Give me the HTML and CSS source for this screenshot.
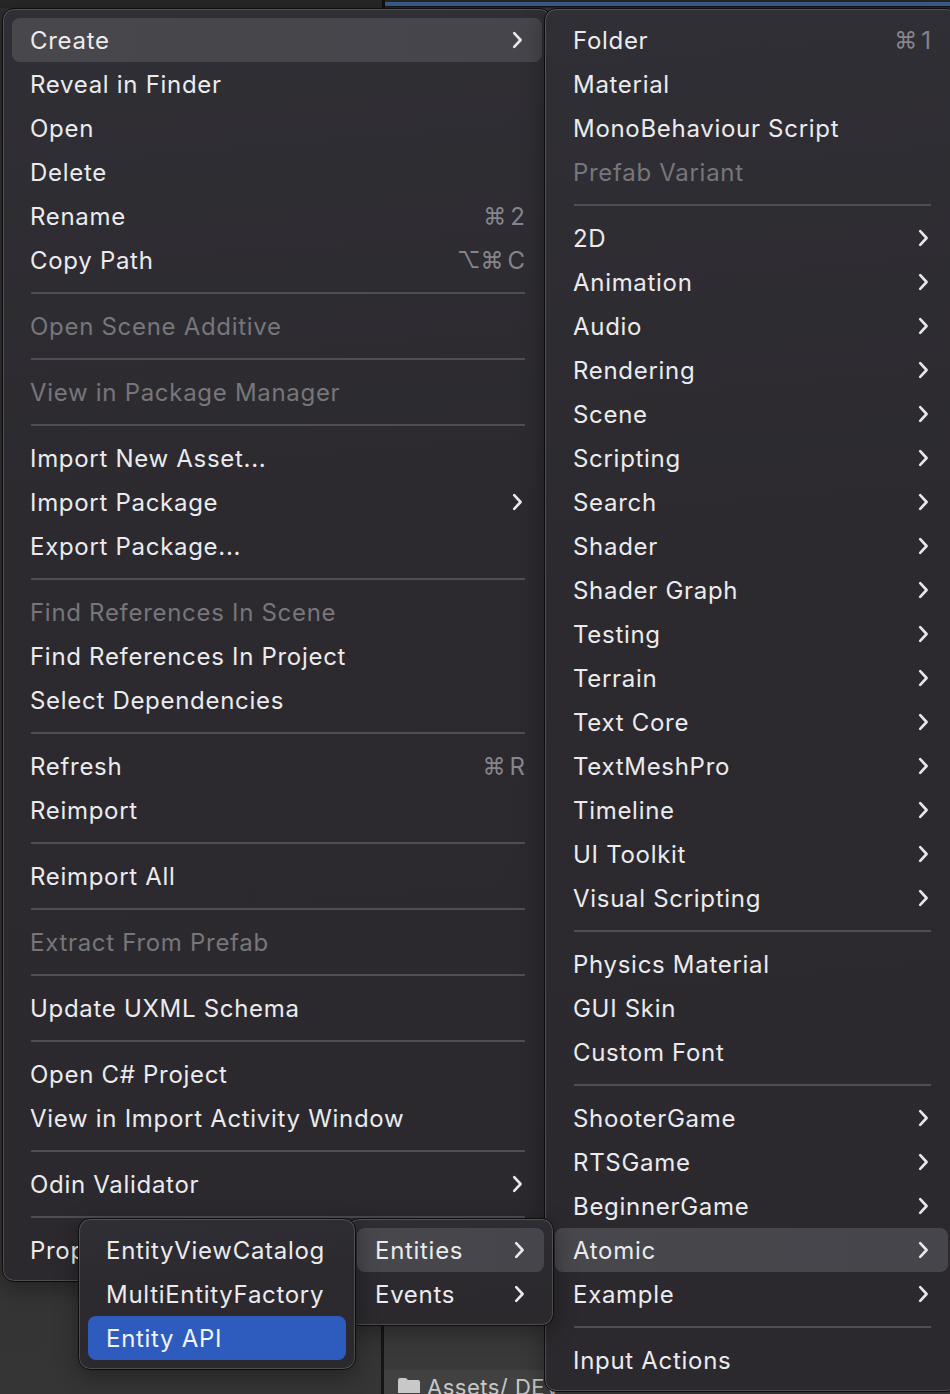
FILE: index.html
```html
<!DOCTYPE html>
<html>
<head>
<meta charset="utf-8">
<link rel="stylesheet" href="styles.css">
</head>
<body>
<div class="desk">
  <div class="topbar">
    <div class="tb-left"></div>
    <div class="tb-blue"></div>
  </div>
  <div class="lower">
    <div class="lower-left"></div>
    <div class="lower-right">
      <div class="pathbar">
        <svg class="folder" width="24" height="16" viewBox="0 0 24 16"><path d="M1 3 Q1 1 3 1 L9 1 L11 3 L21 3 Q23 3 23 5 L23 16 L1 16 Z" fill="#c8c8c8"/></svg>
        <span class="path-text">Assets/ DEV</span>
      </div>
    </div>
  </div>

  <div class="menu menu-main">
    <div class="item hl"><span class="label">Create</span><svg class="chev" viewBox="0 0 11 18"><path d="M2.2 2.2 L8.6 9 L2.2 15.8"/></svg></div>
    <div class="item"><span class="label">Reveal in Finder</span></div>
    <div class="item"><span class="label">Open</span></div>
    <div class="item"><span class="label">Delete</span></div>
    <div class="item"><span class="label">Rename</span><span class="key">⌘<i>2</i></span></div>
    <div class="item"><span class="label">Copy Path</span><span class="key">⌥⌘<i>C</i></span></div>
    <div class="sep"></div>
    <div class="item off"><span class="label">Open Scene Additive</span></div>
    <div class="sep"></div>
    <div class="item off"><span class="label">View in Package Manager</span></div>
    <div class="sep"></div>
    <div class="item"><span class="label">Import New Asset...</span></div>
    <div class="item"><span class="label">Import Package</span><svg class="chev" viewBox="0 0 11 18"><path d="M2.2 2.2 L8.6 9 L2.2 15.8"/></svg></div>
    <div class="item"><span class="label">Export Package...</span></div>
    <div class="sep"></div>
    <div class="item off"><span class="label">Find References In Scene</span></div>
    <div class="item"><span class="label">Find References In Project</span></div>
    <div class="item"><span class="label">Select Dependencies</span></div>
    <div class="sep"></div>
    <div class="item"><span class="label">Refresh</span><span class="key">⌘<i>R</i></span></div>
    <div class="item"><span class="label">Reimport</span></div>
    <div class="sep"></div>
    <div class="item"><span class="label">Reimport All</span></div>
    <div class="sep"></div>
    <div class="item off"><span class="label">Extract From Prefab</span></div>
    <div class="sep"></div>
    <div class="item"><span class="label">Update UXML Schema</span></div>
    <div class="sep"></div>
    <div class="item"><span class="label">Open C# Project</span></div>
    <div class="item"><span class="label">View in Import Activity Window</span></div>
    <div class="sep"></div>
    <div class="item"><span class="label">Odin Validator</span><svg class="chev" viewBox="0 0 11 18"><path d="M2.2 2.2 L8.6 9 L2.2 15.8"/></svg></div>
    <div class="sep"></div>
    <div class="item"><span class="label">Properties...</span></div>
  </div>

  <div class="menu menu-create">
    <div class="item"><span class="label">Folder</span><span class="key">⌘<i>1</i></span></div>
    <div class="item"><span class="label">Material</span></div>
    <div class="item"><span class="label">MonoBehaviour Script</span></div>
    <div class="item off"><span class="label">Prefab Variant</span></div>
    <div class="sep"></div>
    <div class="item"><span class="label">2D</span><svg class="chev" viewBox="0 0 11 18"><path d="M2.2 2.2 L8.6 9 L2.2 15.8"/></svg></div>
    <div class="item"><span class="label">Animation</span><svg class="chev" viewBox="0 0 11 18"><path d="M2.2 2.2 L8.6 9 L2.2 15.8"/></svg></div>
    <div class="item"><span class="label">Audio</span><svg class="chev" viewBox="0 0 11 18"><path d="M2.2 2.2 L8.6 9 L2.2 15.8"/></svg></div>
    <div class="item"><span class="label">Rendering</span><svg class="chev" viewBox="0 0 11 18"><path d="M2.2 2.2 L8.6 9 L2.2 15.8"/></svg></div>
    <div class="item"><span class="label">Scene</span><svg class="chev" viewBox="0 0 11 18"><path d="M2.2 2.2 L8.6 9 L2.2 15.8"/></svg></div>
    <div class="item"><span class="label">Scripting</span><svg class="chev" viewBox="0 0 11 18"><path d="M2.2 2.2 L8.6 9 L2.2 15.8"/></svg></div>
    <div class="item"><span class="label">Search</span><svg class="chev" viewBox="0 0 11 18"><path d="M2.2 2.2 L8.6 9 L2.2 15.8"/></svg></div>
    <div class="item"><span class="label">Shader</span><svg class="chev" viewBox="0 0 11 18"><path d="M2.2 2.2 L8.6 9 L2.2 15.8"/></svg></div>
    <div class="item"><span class="label">Shader Graph</span><svg class="chev" viewBox="0 0 11 18"><path d="M2.2 2.2 L8.6 9 L2.2 15.8"/></svg></div>
    <div class="item"><span class="label">Testing</span><svg class="chev" viewBox="0 0 11 18"><path d="M2.2 2.2 L8.6 9 L2.2 15.8"/></svg></div>
    <div class="item"><span class="label">Terrain</span><svg class="chev" viewBox="0 0 11 18"><path d="M2.2 2.2 L8.6 9 L2.2 15.8"/></svg></div>
    <div class="item"><span class="label">Text Core</span><svg class="chev" viewBox="0 0 11 18"><path d="M2.2 2.2 L8.6 9 L2.2 15.8"/></svg></div>
    <div class="item"><span class="label">TextMeshPro</span><svg class="chev" viewBox="0 0 11 18"><path d="M2.2 2.2 L8.6 9 L2.2 15.8"/></svg></div>
    <div class="item"><span class="label">Timeline</span><svg class="chev" viewBox="0 0 11 18"><path d="M2.2 2.2 L8.6 9 L2.2 15.8"/></svg></div>
    <div class="item"><span class="label">UI Toolkit</span><svg class="chev" viewBox="0 0 11 18"><path d="M2.2 2.2 L8.6 9 L2.2 15.8"/></svg></div>
    <div class="item"><span class="label">Visual Scripting</span><svg class="chev" viewBox="0 0 11 18"><path d="M2.2 2.2 L8.6 9 L2.2 15.8"/></svg></div>
    <div class="sep"></div>
    <div class="item"><span class="label">Physics Material</span></div>
    <div class="item"><span class="label">GUI Skin</span></div>
    <div class="item"><span class="label">Custom Font</span></div>
    <div class="sep"></div>
    <div class="item"><span class="label">ShooterGame</span><svg class="chev" viewBox="0 0 11 18"><path d="M2.2 2.2 L8.6 9 L2.2 15.8"/></svg></div>
    <div class="item"><span class="label">RTSGame</span><svg class="chev" viewBox="0 0 11 18"><path d="M2.2 2.2 L8.6 9 L2.2 15.8"/></svg></div>
    <div class="item"><span class="label">BeginnerGame</span><svg class="chev" viewBox="0 0 11 18"><path d="M2.2 2.2 L8.6 9 L2.2 15.8"/></svg></div>
    <div class="item hl"><span class="label">Atomic</span><svg class="chev" viewBox="0 0 11 18"><path d="M2.2 2.2 L8.6 9 L2.2 15.8"/></svg></div>
    <div class="item"><span class="label">Example</span><svg class="chev" viewBox="0 0 11 18"><path d="M2.2 2.2 L8.6 9 L2.2 15.8"/></svg></div>
    <div class="sep"></div>
    <div class="item"><span class="label">Input Actions</span></div>
  </div>

  <div class="menu menu-sub1">
    <div class="item hl"><span class="label">Entities</span><svg class="chev" viewBox="0 0 11 18"><path d="M2.2 2.2 L8.6 9 L2.2 15.8"/></svg></div>
    <div class="item"><span class="label">Events</span><svg class="chev" viewBox="0 0 11 18"><path d="M2.2 2.2 L8.6 9 L2.2 15.8"/></svg></div>
  </div>

  <div class="menu menu-sub2">
    <div class="item"><span class="label">EntityViewCatalog</span></div>
    <div class="item"><span class="label">MultiEntityFactory</span></div>
    <div class="item sel"><span class="label">Entity API</span></div>
  </div>
</div>
</body>
</html>
```

FILE: styles.css
```css
html, body {
  margin: 0;
  padding: 0;
  width: 950px;
  height: 1394px;
  overflow: hidden;
  background: #2f2f2f;
}

.desk {
  position: relative;
  width: 950px;
  height: 1394px;
  overflow: hidden;
  font-family: "Inter", "DejaVu Sans", sans-serif;
  background: linear-gradient(160deg, #2c2c2c 0%, #333333 60%, #363636 100%);
  display: flex;
  flex-direction: column;
}

.topbar {
  height: 8px;
  display: flex;
  background: #262626;
}
.tb-left {
  width: 382px;
  background: #272727;
  border-right: 3px solid #111;
}
.tb-blue {
  flex: 1;
  margin-top: 2px;
  height: 4px;
  background: #3b5f8c;
  border-bottom: 1px solid #161616;
}

.lower {
  flex: 1;
  display: flex;
}
.lower-left {
  width: 381px;
  background: linear-gradient(170deg, #2e2e2e, #353535);
}
.lower-right {
  flex: 1;
  border-left: 3px solid #151515;
  background: #393939;
  display: flex;
  flex-direction: column;
  justify-content: flex-end;
}
.pathbar {
  height: 18px;
  background: #414141;
  display: flex;
  align-items: flex-start;
  gap: 6px;
  padding: 6px 0 0 13px;
  overflow: hidden;
}
.folder {
  flex: none;
  margin-top: 1px;
}
.path-text {
  color: #c8c8c8;
  font-size: 22px;
  line-height: 22px;
  letter-spacing: 0.5px;
}

/* menus */
.menu {
  position: absolute;
  box-sizing: border-box;
  display: flex;
  flex-direction: column;
  padding: 9px;
  border: 1px solid #0c0c0e;
  border-radius: 12px;
  background: linear-gradient(175deg, #302f35 0%, #2c2a2f 40%, #2b292d 100%);
  box-shadow: inset 0 0 0 1px rgba(255, 255, 255, 0.17), 0 6px 22px rgba(0, 0, 0, 0.35);
  color: #ebebed;
  font-size: 24px;
}

.menu-main {
  left: 2px;
  top: 8px;
  width: 550px;
}
.menu-create {
  left: 544px;
  top: 8px;
  width: 414px;
  padding-left: 10px;
}
.menu-sub1 {
  left: 347px;
  top: 1218px;
  width: 207px;
}
.menu-sub2 {
  left: 78px;
  top: 1218px;
  width: 278px;
}

.item {
  height: 44px;
  flex: none;
  display: flex;
  align-items: center;
  padding: 0 19px 0 18px;
  border-radius: 8px;
  white-space: nowrap;
}
.item .label {
  flex: 1;
  letter-spacing: 0.7px;
}
.item.hl {
  background: linear-gradient(90deg, #48474c, #46454b);
}
.item.sel {
  background: #2e5bbe;
  color: #f2f4fa;
}
.item.off {
  color: #77767b;
}

.key {
  color: #86858b;
  font-size: 23px;
  display: flex;
  align-items: center;
  gap: 4px;
  margin-right: -2px;
}
.key i {
  font-style: normal;
  font-family: "Inter", sans-serif;
  font-size: 24px;
}

.chev {
  width: 11px;
  height: 18px;
  flex: none;
}
.chev path {
  fill: none;
  stroke: #e9e9eb;
  stroke-width: 2.6;
  stroke-linecap: round;
  stroke-linejoin: round;
}

.sep {
  height: 22px;
  flex: none;
  display: flex;
  align-items: center;
  margin: 0 17px 0 19px;
}
.sep::before {
  content: "";
  flex: 1;
  height: 2px;
  background: #4f4e54;
}
```
